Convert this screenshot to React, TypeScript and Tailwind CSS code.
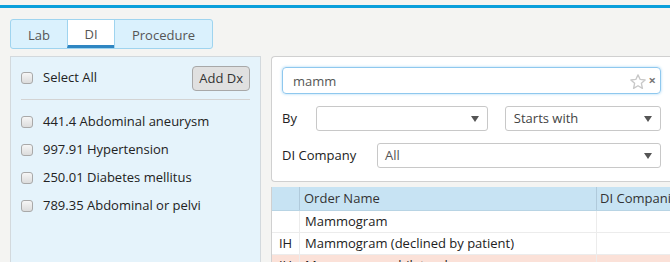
import { useState } from "react";

const diagnoses = [
    "441.4 Abdominal aneurysm",
    "997.91 Hypertension",
    "250.01 Diabetes mellitus",
    "789.35 Abdominal or pelvi",
];

const rows = [
    { type: "", name: "Mammogram", company: "", tone: "bg-white" },
    { type: "IH", name: "Mammogram (declined by patient)", company: "", tone: "bg-white" },
    { type: "IH", name: "Mammogram - bilateral", company: "", tone: "bg-[#fbe1d8]" },
];

const Caret = () => (
    <svg width="8" height="6" viewBox="0 0 8 6" className="text-[#555]">
        <path d="M0 0 L8 0 L4 6 Z" fill="currentColor" />
    </svg>
);

const Box = () => (
    <span className="inline-block shrink-0 w-[12px] h-[12px] rounded-[3px] border border-[#a9a9a9] bg-gradient-to-b from-[#f6f6f6] to-[#dcdcdc]"></span>
);

const App = () => {
    const [tab, setTab] = useState("DI");
    const [query, setQuery] = useState("mamm");

    return (
        <div
            className="w-[670px] h-[262px] overflow-hidden bg-[#f4f4f2] text-[13px] text-[#333]"
            style={{ fontFamily: '"Open Sans", "Noto Sans", sans-serif' }}
        >
            <div className="h-[5px]"></div>
            <div className="h-[3px] bg-[#0a9fdb]"></div>

            <div className="pl-[10px] pt-[11px] flex">
                <div className="flex h-[30px] rounded-[3px] border border-[#9fd4ef] bg-[#daf1fd] overflow-hidden">
                    {["Lab", "DI", "Procedure"].map((name, i) => (
                        <button
                            key={name}
                            onClick={() => setTab(name)}
                            className={`h-full flex items-center justify-center text-[13px] ${
                                i === 0 ? "w-[56px]" : i === 1 ? "w-[47px]" : "w-[98px]"
                            } ${i > 0 ? "border-l border-[#9fd4ef]" : ""} ${
                                tab === name
                                    ? "bg-white text-[#555] border-b-[3px] border-b-[#2f86c2] pt-[4px]"
                                    : "text-[#555] pt-[3px]"
                            }`}
                        >
                            {name}
                        </button>
                    ))}
                </div>
            </div>

            <div className="flex gap-[10px] pl-[10px] pt-[7px]">
                <div className="w-[251px] h-[210px] shrink-0 bg-[#e5f3fb] border border-[#d3d9dd] px-[10px]">
                    <div className="flex items-start justify-between pt-[9px] h-[43px] border-b border-[#d3d3d3]">
                        <label className="flex items-center gap-[10px] pt-[2px] text-[#222]">
                            <Box />
                            Select All
                        </label>
                        <button className="h-[25px] px-[6px] rounded-[4px] border border-[#a8a8a8] bg-[#e0e0e0] text-[#333] text-[13px] leading-none">
                            Add Dx
                        </button>
                    </div>
                    <div className="pt-[12px] flex flex-col gap-[9px]">
                        {diagnoses.map((item) => (
                            <label key={item} className="flex items-center gap-[10px] h-[19px] text-[#222]">
                                <Box />
                                {item}
                            </label>
                        ))}
                    </div>
                </div>

                <div className="flex-1 min-w-0 flex flex-col">
                    <div className="h-[126px] bg-white border border-[#d0d0d0] rounded-l-[4px] border-r-0 pl-[10px] pr-[9px] pt-[10px]">
                        <div className="h-[27px] flex items-center rounded-[4px] border border-[#8fc8ee] shadow-[0_0_3px_#a8d6f5] pl-[10px] pr-[4px]">
                            <input
                                value={query}
                                onChange={(e) => setQuery(e.target.value)}
                                className="flex-1 outline-none bg-transparent text-[13px] text-[#555] pt-[2px]"
                            />
                            <svg width="20" height="18" viewBox="0 0 24 24" className="mt-[2px]">
                                <path
                                    d="M12 2.5 L14.9 8.6 L21.5 9.3 L16.5 13.8 L17.9 20.4 L12 17 L6.1 20.4 L7.5 13.8 L2.5 9.3 L9.1 8.6 Z"
                                    fill="none"
                                    stroke="#c8c8c8"
                                    strokeWidth="1.8"
                                    strokeLinejoin="round"
                                />
                            </svg>
                            <span className="text-[#777] text-[13px] font-bold leading-none ml-[1px]">×</span>
                        </div>

                        <div className="flex items-center h-[25px] mt-[12px]">
                            <span className="w-[34px] text-[#222] pt-[1px]">By</span>
                            <div className="w-[173px] h-[25px] border border-[#c8c8c8] rounded-[3px] flex items-center justify-end pr-[8px]">
                                <Caret />
                            </div>
                            <div className="w-[157px] h-[25px] ml-[17px] border border-[#c8c8c8] rounded-[3px] flex items-center justify-between pl-[8px] pr-[8px] pt-[1px] text-[#444]">
                                Starts with
                                <Caret />
                            </div>
                        </div>

                        <div className="flex items-center h-[25px] mt-[12px]">
                            <span className="w-[95px] text-[#222] pt-[1px]">DI Company</span>
                            <div className="w-[284px] h-[25px] border border-[#c8c8c8] rounded-[3px] flex items-center justify-between pl-[7px] pr-[8px] pt-[1px] text-[#555]">
                                All
                                <Caret />
                            </div>
                        </div>
                    </div>

                    <div className="mt-[5px] border-l border-[#d0d0d0]">
                        <div className="flex h-[24px] bg-[#c7e3f3] border-b border-[#b8d4e4] text-[#333]">
                            <div className="w-[28px] border-r border-[#b0cadb]"></div>
                            <div className="w-[297px] border-r border-[#b0cadb] pl-[4px] pt-[1px] flex items-center">Order Name</div>
                            <div className="flex-1 pl-[3px] pt-[1px] flex items-center whitespace-nowrap overflow-hidden">DI Companies</div>
                        </div>
                        {rows.map((row, i) => (
                            <div key={i} className={`flex h-[22px] border-b border-[#ececec] ${row.tone} text-[#222]`}>
                                <div className="w-[28px] border-r border-[#ececec] flex items-center justify-center pt-[1px]">{row.type}</div>
                                <div className="w-[297px] border-r border-[#ececec] pl-[5px] pt-[1px] flex items-center">{row.name}</div>
                                <div className="flex-1">{row.company}</div>
                            </div>
                        ))}
                    </div>
                </div>
            </div>
        </div>
    );
};

export default App;
